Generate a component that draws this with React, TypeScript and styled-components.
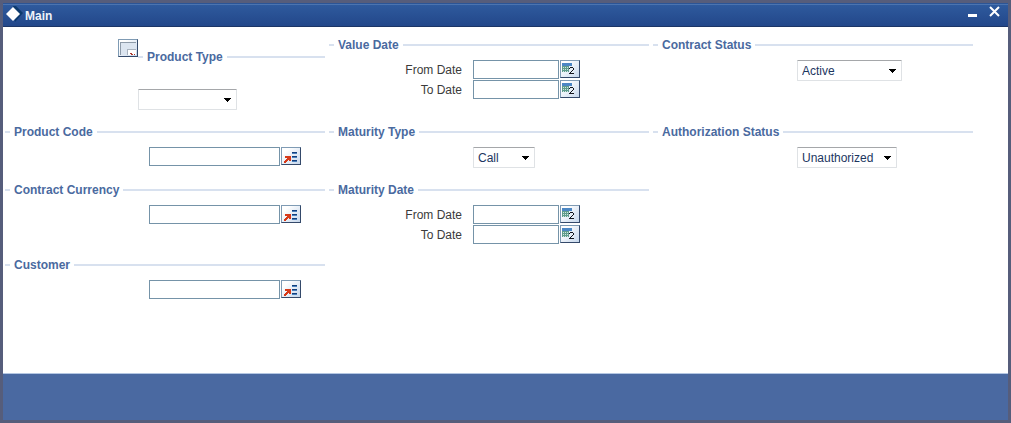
import React from 'react';
import styled, { createGlobalStyle } from 'styled-components';

const GlobalStyle = createGlobalStyle`
  *, *::before, *::after { box-sizing: border-box; }
  body { margin: 0; background: #565d7b; }
  body, button, input, select {
    font-family: "Liberation Sans", Arial, sans-serif;
    font-size: 12px;
    line-height: 14px;
  }
`;

const Window = styled.div`
  display: flex;
  flex-direction: column;
  min-height: 100vh;
  border: 3px solid #565d7b;
  background: #fff;
`;

const TitleBar = styled.header`
  display: flex;
  align-items: center;
  height: 24px;
  padding: 0 8px 0 2px;
  border-top: 1px solid #2c5596;
  border-bottom: 1px solid #1c3566;
  background: linear-gradient(#4b74b0 0 1px, #2e5a9d 1px, #23478a);
`;

const Title = styled.h1`
  flex: 1;
  margin: 0;
  padding: 2px 0 0 2px;
  font-size: 12px;
  font-weight: bold;
  line-height: 14px;
  color: #eef3fa;
`;

const WindowButtons = styled.div`
  display: flex;
  gap: 11px;
`;

const WindowButton = styled.button`
  display: flex;
  padding: 0;
  border: 0;
  background: none;
  cursor: pointer;
`;

const Content = styled.main`
  flex: 1;
  display: grid;
  grid-template-columns: repeat(3, minmax(0, 1fr));
  align-content: start;
  gap: 14px 4px;
  padding: 11px 35px 24px 2px;
`;

const Group = styled.fieldset<{ $column?: number }>`
  min-width: 0;
  margin: 0;
  padding: 0;
  border: 0;
  ${({ $column }) => $column && `grid-column: ${$column};`}
`;

const Legend = styled.legend`
  display: flex;
  align-items: center;
  width: 100%;
  padding: 0;
  font-weight: bold;
  line-height: 14px;
  color: #4a6a9f;
  white-space: nowrap;

  &::before, &::after {
    content: "";
    height: 2px;
    background: #d8e1ef;
  }
  &::before { width: 5px; margin-right: 4px; }
  &::after { flex: 1; margin-left: 4px; }
`;

const Fields = styled.div<{ $top?: number }>`
  display: grid;
  gap: 1px;
  padding-top: ${({ $top = 8 }) => $top}px;
`;

const FieldRow = styled.div`
  display: flex;
  gap: 1px;
`;

const FieldLabel = styled.label`
  width: 143px;
  padding: 2px 10px 0 0;
  line-height: 17px;
  text-align: right;
  color: #3b3b3b;
`;

const TextInput = styled.input<{ $width: number }>`
  width: ${({ $width }) => $width}px;
  height: 19px;
  padding: 0 3px;
  border: 1px solid #7593a8;
  border-radius: 0;
  background: #fff;
  color: #1c365f;
`;

const IconButton = styled.button`
  display: flex;
  flex: none;
  width: 20px;
  height: 18px;
  padding: 0;
  border: 1px solid;
  border-color: #7f9bb4 #34496a #34496a #7f9bb4;
  background: linear-gradient(135deg, #fff 20%, #c6d7ec);
  cursor: pointer;
`;

const SelectBox = styled.div<{ $width: number }>`
  position: relative;
  width: ${({ $width }) => $width}px;
  height: 22px;
`;

const SelectInput = styled.select`
  display: block;
  width: 100%;
  height: 21px;
  padding: 0 14px 0 4px;
  border: 1px solid #dfe2e5;
  border-top-color: #a5a7aa;
  border-radius: 1px;
  background: #fff;
  color: #1c365f;
  appearance: none;
`;

const SelectArrow = styled.svg`
  position: absolute;
  top: 9px;
  right: 5px;
  pointer-events: none;
`;

const ProductType = styled.div`
  display: flex;
  align-items: flex-start;
  padding: 1px 0 0 113px;

  ${Group} { flex: 1; margin-top: 11px; }
`;

const Footer = styled.footer`
  height: 47px;
  border-top: 1px solid #b4c6e2;
  background: #4a69a1;
`;

const CalendarIcon = () => (
  <svg width="18" height="16" viewBox="0 0 18 16" shapeRendering="crispEdges" aria-hidden="true">
    <path fill="#5f9c8c" d="M1 5h8v6H1z" />
    <path fill="#4c87c4" d="M1 2h10v3H1z" />
    <path fill="#cfe6df" d="M2 6h1v1H2zM4 6h1v1H4zM6 6h1v1H6zM2 8h1v1H2zM4 8h1v1H4zM6 8h1v1H6zM2 10h1v1H2zM4 10h1v1H4zM6 10h1v1H6z" />
    <path fill="#e6eef7" d="M8 5h5v8H8z" />
    <path fill="#14171f" d="M9 6h3v1H9zM8 7h1v1H8zM12 7h1v2h-1zM11 9h1v1h-1zM10 10h1v1h-1zM9 11h1v1H9zM8 12h5v1H8z" />
  </svg>
);

const LookupIcon = () => (
  <svg width="18" height="16" viewBox="0 0 18 16" shapeRendering="crispEdges" aria-hidden="true">
    <path fill="#123f7c" d="M10 4h5v1h-5zM10 8h5v1h-5zM10 12h5v1h-5z" />
    <path fill="#4a80bd" d="M10 5h5v1h-5zM10 9h5v1h-5zM10 13h5v1h-5z" />
    <path fill="#d63a1a" d="M3 8h6v5H7v-1H6v1H5v1H4v1H2v-2h1v-1h1v-1h1v-1H3z" />
  </svg>
);

const DetailIcon = () => (
  <svg width="18" height="16" viewBox="0 0 18 16" shapeRendering="crispEdges" aria-hidden="true">
    <path fill="#dce5f0" d="M2 3h15v12H2z" />
    <path fill="#8d9aa8" d="M1 2h16v1H2v12H1z" />
    <path fill="#fff" d="M9 10h8v5H9z" />
    <path fill="#a9b3bf" d="M8 9h9v1H9v5H8z" />
    <path fill="#b03a2e" d="M11 13h2v1h-2zM12 14h2v1h-2zM15 14h1v1h-1z" />
  </svg>
);

interface DateRowProps { id: string; label: string }

const DateRow = ({ id, label }: DateRowProps) => (
  <FieldRow>
    <FieldLabel htmlFor={id}>{label}</FieldLabel>
    <TextInput id={id} $width={86} />
    <IconButton type="button" aria-label={`${label} calendar`}><CalendarIcon /></IconButton>
  </FieldRow>
);

const DateGroup = ({ id, title }: { id: string; title: string }) => (
  <Group>
    <Legend>{title}</Legend>
    <Fields>
      <DateRow id={`${id}-from`} label="From Date" />
      <DateRow id={`${id}-to`} label="To Date" />
    </Fields>
  </Group>
);

const LookupGroup = ({ title }: { title: string }) => (
  <Group $column={1}>
    <Legend>{title}</Legend>
    <Fields>
      <FieldRow>
        <FieldLabel as="span" />
        <TextInput aria-label={title} $width={131} />
        <IconButton type="button" aria-label={`Find ${title}`}><LookupIcon /></IconButton>
      </FieldRow>
    </Fields>
  </Group>
);

interface SelectProps { label: string; width: number; options: string[] }

const Select = ({ label, width, options }: SelectProps) => (
  <SelectBox $width={width}>
    <SelectInput aria-label={label}>
      {options.map((option) => <option key={option}>{option}</option>)}
    </SelectInput>
    <SelectArrow width="8" height="4" viewBox="0 0 8 4" shapeRendering="crispEdges" aria-hidden="true">
      <path d="M0 0h7v1H0zM1 1h5v1H1zM2 2h3v1H2zM3 3h1v1H3z" />
    </SelectArrow>
  </SelectBox>
);

const SelectGroup = ({ label, width, options }: SelectProps) => (
  <Group>
    <Legend>{label}</Legend>
    <Fields>
      <FieldRow>
        <FieldLabel as="span" />
        <Select label={label} width={width} options={options} />
      </FieldRow>
    </Fields>
  </Group>
);

export default function App() {
  return (
    <>
      <GlobalStyle />
      <Window>
        <TitleBar>
          <svg width="18" height="18" viewBox="0 0 18 18" aria-hidden="true">
            <path fill="#0c3a6e" d="M8 0h3l7 7-8 9z" />
            <path fill="#fff" d="M8 1l7 7-7 7-7-7z" />
          </svg>
          <Title>Main</Title>
          <WindowButtons>
            <WindowButton type="button" aria-label="Minimize">
              <svg width="11" height="20" viewBox="0 0 11 20" shapeRendering="crispEdges" aria-hidden="true">
                <path fill="#fff" d="M1 9h9v3H1z" />
              </svg>
            </WindowButton>
            <WindowButton type="button" aria-label="Close">
              <svg width="11" height="20" viewBox="0 0 11 20" aria-hidden="true">
                <path stroke="#fff" strokeWidth="2" d="M1 2l9 9M10 2l-9 9" />
              </svg>
            </WindowButton>
          </WindowButtons>
        </TitleBar>

        <Content>
          <ProductType>
            <IconButton type="button" aria-label="Product details"><DetailIcon /></IconButton>
            <Group>
              <Legend>Product Type</Legend>
              <Fields $top={25}>
                <Select label="Product Type" width={99} options={['']} />
              </Fields>
            </Group>
          </ProductType>
          <DateGroup id="value-date" title="Value Date" />
          <SelectGroup label="Contract Status" width={105} options={['Active']} />

          <LookupGroup title="Product Code" />
          <SelectGroup label="Maturity Type" width={62} options={['Call']} />
          <SelectGroup label="Authorization Status" width={100} options={['Unauthorized']} />

          <LookupGroup title="Contract Currency" />
          <DateGroup id="maturity-date" title="Maturity Date" />

          <LookupGroup title="Customer" />
        </Content>

        <Footer />
      </Window>
    </>
  );
}
